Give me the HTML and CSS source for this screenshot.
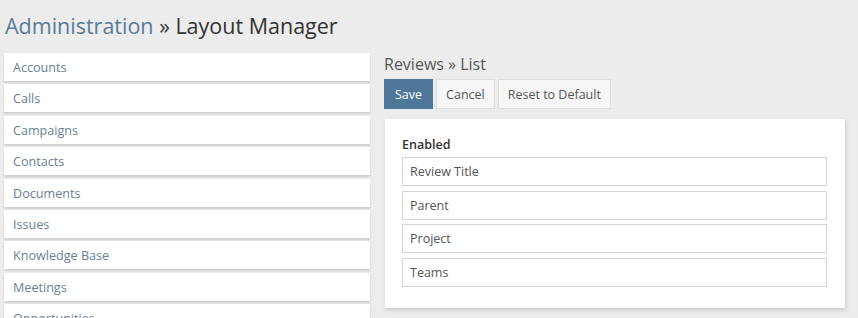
FILE: index.html
```html
<!DOCTYPE html>
<html lang="en">
<head>
    <meta charset="UTF-8">
    <title>Layout Manager</title>
    <link rel="stylesheet" href="styles.css">
</head>
<body>
    <div class="page">
        <h1 class="page-title"><a href="#">Administration</a> » Layout Manager</h1>
        <div class="layout">
            <ul class="scope-list">
                <li>Accounts</li>
                <li>Calls</li>
                <li>Campaigns</li>
                <li>Contacts</li>
                <li>Documents</li>
                <li>Issues</li>
                <li>Knowledge Base</li>
                <li>Meetings</li>
                <li>Opportunities</li>
            </ul>
            <div class="editor">
                <h4 class="editor-title">Reviews » List</h4>
                <div class="button-row">
                    <button class="btn btn-primary">Save</button>
                    <button class="btn">Cancel</button>
                    <button class="btn">Reset to Default</button>
                </div>
                <div class="panel">
                    <div class="group-label">Enabled</div>
                    <ul class="field-list">
                        <li>Review Title</li>
                        <li>Parent</li>
                        <li>Project</li>
                        <li>Teams</li>
                    </ul>
                </div>
            </div>
        </div>
    </div>
</body>
</html>
```

FILE: styles.css
```css
html, body {
  margin: 0;
  height: 100%;
  overflow: hidden;
  background-color: #ececec;
  font-family: 'Open Sans', sans-serif;
}

.page {
  padding: 0 13px 0 4px;
}

.page-title {
  margin: 0;
  height: 53px;
  padding: 11px 0 0 1px;
  box-sizing: border-box;
  font-size: 21.5px;
  font-weight: 400;
  line-height: 30px;
  color: #333;
}

.page-title a {
  color: #5a7b98;
  text-decoration: none;
}

.layout {
  display: flex;
  gap: 14px;
}

/* left column: entity list */
.scope-list {
  list-style: none;
  margin: 0;
  padding: 0;
  width: 366px;
  flex-shrink: 0;
  display: flex;
  flex-direction: column;
  gap: 3.4px;
}

.scope-list li {
  height: 26px;
  padding-top: 2px;
  line-height: 26px;
  padding-left: 9px;
  background-color: #fff;
  box-shadow: 0 2px 2px rgba(0, 0, 0, 0.13);
  font-size: 12.6px;
  color: #6a7f94;
}

/* right column */
.editor {
  flex: 1;
}

.editor-title {
  margin: 0;
  height: 25px;
  padding-top: 1px;
  font-size: 16px;
  font-weight: 400;
  line-height: 20px;
  color: #555;
}

.button-row {
  display: flex;
  gap: 3px;
  margin-bottom: 10px;
}

.btn {
  height: 30px;
  padding: 0 9px;
  border: 1px solid #ddd;
  background-color: #f6f6f6;
  color: #555;
  font-family: 'Open Sans', sans-serif;
  font-size: 12.5px;
  cursor: pointer;
}

.btn-primary {
  background-color: #4e7699;
  border-color: #4e7699;
  color: #fff;
  padding: 0 10px;
}

.panel {
  margin-left: 1px;
  background-color: #fff;
  box-shadow: 1px 2px 4px rgba(0, 0, 0, 0.15);
  padding: 16px 18px 21px 17px;
}

.group-label {
  font-size: 12.5px;
  font-weight: 600;
  color: #333;
  line-height: 20px;
  margin-bottom: 2px;
}

.field-list {
  list-style: none;
  margin: 0;
  padding: 0;
  display: flex;
  flex-direction: column;
  gap: 4.6px;
}

.field-list li {
  height: 29px;
  line-height: 27px;
  box-sizing: border-box;
  border: 1px solid #d4d4d4;
  padding-left: 7px;
  font-size: 12.5px;
  color: #555;
}
```
